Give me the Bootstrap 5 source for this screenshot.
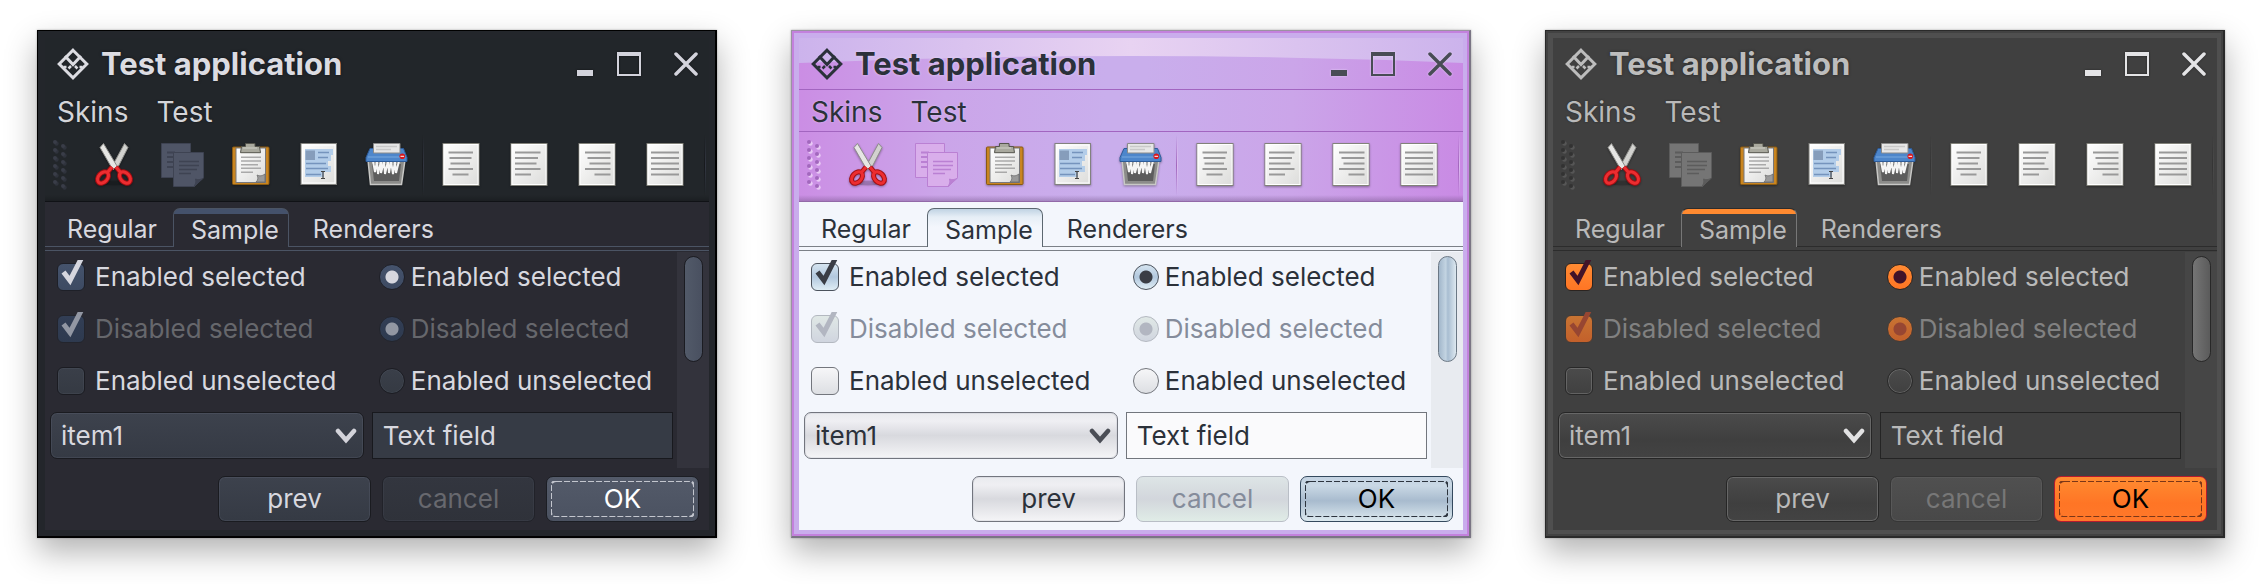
<!DOCTYPE html>
<html lang="en">
<head>
<meta charset="utf-8">
<meta name="viewport" content="width=device-width, initial-scale=1">
<title>Test application</title>
<link href="https://cdn.jsdelivr.net/npm/bootstrap@5.3.0/dist/css/bootstrap.min.css" rel="stylesheet">
<style>
body { background: #fff; font-family: Inter, "Liberation Sans", sans-serif; font-size: 25px; line-height: 30px; }
.skin-col { padding: 30px 37px 46px; }
svg { display: block; flex: none; }

/* window frame */
.skin-window {
  padding: 7px 6px 6px 7px; color: var(--fg); background: var(--frame);
  border-style: solid; border-color: var(--edge); border-width: 1px 2px 2px 1px;
  box-shadow: inset 0 0 0 2px var(--frame-line), 0 0 2px rgba(0,0,0,.3), 0 14px 30px rgba(0,0,0,.3);
}
.window-head { position: relative; background: var(--head); border-bottom: 1px solid var(--head-end); }
.window-head > * { position: relative; }
.window-head::after { content: ""; position: absolute; left: 0; right: 0; bottom: 0; height: 6px; background: linear-gradient(transparent, var(--head-fade)); }
.head-glow { position: absolute !important; top: 0; left: 0; width: 100%; height: 26px; display: none; }
.title-bar { height: 52px; padding: 0 3px 0 12px; border-bottom: 1px solid var(--head-line); }
.title-text { font-size: 31px; font-weight: 700; line-height: 34px; text-shadow: 0 0 3px var(--halo); margin: 0 auto 0 12px; color: var(--title); white-space: nowrap; }
.ctl { background: none; border: 0; padding: 0; color: var(--ctl); filter: drop-shadow(0 0 1px var(--halo)); }
.ctl + .ctl { margin-left: 24px; }
.ctl-close { width: 41px; }
.menu-bar { height: 42px; padding: 2px 0 0 12px; gap: 28px; font-size: 28px; border-bottom: 1px solid var(--head-line); }
.menu-bar a { color: var(--menu); text-decoration: none; text-shadow: 0 0 2px var(--halo); }
.tool-bar { height: 69px; padding-bottom: 6px; }
.grip { width: 35px; padding-left: 7px; }
.tool { flex: 0 1 68px; min-width: 0; background: none; border: 0; padding: 0; }
.tool svg { margin: auto; filter: drop-shadow(0 1px 1px rgba(0,0,0,.35)); }
.tool:disabled svg { filter: none; }
.tool-sep { width: 7px; height: 64px; padding: 3px 0 0 2px; flex: none; }
.tool-sep i { display: block; width: 2px; height: 100%; background: linear-gradient(90deg, var(--sep-a) 50%, var(--sep-b) 50%); mask-image: linear-gradient(transparent, #000 50%, transparent); -webkit-mask-image: linear-gradient(transparent, #000 50%, transparent); }

/* body */
.window-body { background: var(--body); }
.tab-strip { height: 45px; padding: 6px 0 0 4px; gap: 6px; border-bottom: 1px solid var(--rule); }
.tab-strip .nav-link { height: 39px; margin-bottom: -1px; padding: 3px 9px 0 17px; color: var(--fg); border: 1px solid transparent; border-radius: 7px 7px 0 0; line-height: 30px; }
.tab-strip .nav-link:hover { border-color: transparent; color: var(--fg); }
.tab-strip .nav-link.active, .tab-strip .nav-link.active:hover { color: var(--fg); background: var(--tab); border-color: var(--tab-line); border-bottom: 0; }
.pane { margin-top: 3px; border-top: 1px solid var(--rule); }
.field-grid { display: grid; grid-template-columns: 51fr 49fr; grid-auto-rows: 52px; padding: 0 0 9px 1px; }
.pick { padding-left: 11px; gap: 10px; white-space: nowrap; font-size: 26px; }
.pick-round { gap: 6px; }
.pick.pick-off { color: var(--off); }
.pick .form-check-input { float: none; margin: 0; width: 28px; height: 28px; background: var(--box); border: 1px solid var(--box-edge); border-radius: 6px; opacity: 1; box-shadow: inset 0 0 0 1px var(--box-in); }
.pick .form-check-input[type=radio] { width: 26px; height: 26px; border-radius: 50%; }
.pick .form-check-input:checked { background: var(--box-on); border-color: var(--box-on-edge); box-shadow: none; }
.pick .form-check-input:disabled { background: var(--box-off); border-color: var(--box-off-edge); box-shadow: none; }
.pick .form-check-input[type=radio]:checked { background: radial-gradient(circle, var(--mark) 6px, transparent 7px), var(--box-on); }
.pick .form-check-input[type=radio]:disabled { background: radial-gradient(circle, var(--mark-off) 6px, transparent 7px), var(--box-off); }
.pick-mark { position: absolute; left: 0; top: -3px; pointer-events: none; color: var(--mark); }
.pick-off .pick-mark { color: var(--mark-off); }
.field-cell { padding: 5px 4px; }
.skin-window .form-select, .skin-window .form-control { height: 47px; font-size: 26px; line-height: 30px; padding: 0 10px; color: var(--fg); }
.skin-window .form-select { background: var(--btn); border: 1px solid var(--btn-edge); border-radius: 7px; box-shadow: inset 0 0 0 1px var(--btn-in); }
.skin-window .form-control { background: var(--input); border: 1px solid var(--input-edge); border-radius: 0; }
.chevron { position: absolute; right: 7px; top: 15px; pointer-events: none; color: var(--arrow); }
.scroll-track { width: 32px; margin-top: 1px; padding: 4px 6px 0 7px; background: var(--track); flex: none; }
.scroll-thumb { height: 106px; border-radius: 10px; border: 1px solid var(--thumb-edge); background: var(--thumb); }
.button-row { height: 62px; padding: 8px 10px 0 0; gap: 11px; }
.button-row .btn { width: 153px; height: 46px; padding: 0; font-size: 26px; line-height: 30px; border-radius: 7px; color: var(--fg); background: var(--btn); border: 1px solid var(--btn-edge); box-shadow: inset 0 0 0 1px var(--btn-in); }
.button-row .btn:disabled { opacity: 1; color: var(--off-btn); background: var(--btn-off); border-color: var(--btn-off-edge); box-shadow: inset 0 0 0 1px var(--btn-off-in); }
.button-row .btn-ok { color: var(--ok-fg); background: var(--ok); border-color: var(--ok-edge); box-shadow: none; }
.focus-dash { position: absolute; inset: 4px; width: calc(100% - 8px); height: calc(100% - 8px); color: var(--dash); }

/* skins */
.skin-dusk {
  --edge:#000; --frame-line:#23262b; --frame:#23262b; --fg:#d8d8df; --title:#dcdce2; --menu:#d4d5d9; --halo:rgba(0,0,0,.5); --ctl:#d3d3dc;
  --head:#22262a; --head-line:transparent; --head-end:#101216; --head-fade:rgba(0,0,0,.2);
  --dot-a:#393d48; --dot-b:#2f333c; --sep-a:#17191d; --sep-b:#323641;
  --body:#2a2a32; --rule:#4b5464; --tab:linear-gradient(#44516b 5px, #2a2a32 5px); --tab-line:#4b5464;
  --off:#66676c; --off-btn:#67686e;
  --box:linear-gradient(#3a3f49,#353a43); --box-edge:#1b1c22; --box-in:rgba(120,130,150,.12);
  --box-on:linear-gradient(#45536c,#3d4a62); --box-on-edge:#1e2028; --box-off:linear-gradient(#323e55,#2e3a4f); --box-off-edge:#23252d;
  --mark:#d6d7df; --mark-off:#9297a3;
  --btn:linear-gradient(#3d424d,#353a44); --btn-edge:#1a1b20; --btn-in:rgba(120,130,150,.18); --arrow:#d3d3da;
  --btn-off:linear-gradient(#33363f,#2f323a); --btn-off-edge:#212229; --btn-off-in:rgba(120,130,150,.1);
  --ok:linear-gradient(#535a69,#4b5261); --ok-edge:#1c1e24; --ok-fg:#fff; --dash:#c3c6ce;
  --input:#363b45; --input-edge:#18191e; --track:#33333c; --thumb:linear-gradient(90deg,#525a69,#495060); --thumb-edge:#1b1c22;
  --page-a:#4f5566; --page-b:#3e4352;
}
.skin-orchid {
  --edge:#9b92a2 #7a7584 #7a7584 #9b92a2; --frame-line:#c381dd; --frame:#c9adec; --fg:#2b313a; --title:#2b313a; --menu:#2b313a; --halo:rgba(235,220,250,.8); --ctl:#484c55;
  --head:linear-gradient(92deg,#cb8de4,#cba5e9 22%,#c9aeec 46%,#c9aeec 52%,#cba5e9 74%,#c98ae4); --head-line:#a265c0; --head-end:#9269a8; --head-fade:rgba(110,80,130,.4);
  --dot-a:#a267bd; --dot-b:#e8c9f5; --sep-a:#a267bd; --sep-b:#dcbcef;
  --body:#f3f6fc; --rule:#7b8087; --tab:linear-gradient(#c0d3e3,#e6eef6 8px,#f3f6fc 18px); --tab-line:#5c6770;
  --off:#858c9b; --off-btn:#858c9b;
  --box:linear-gradient(#f6f6f8,#dddfe3); --box-edge:#73767d; --box-in:transparent;
  --box-on:linear-gradient(#d5e4f0,#b2c8de 50%,#dfedf5); --box-on-edge:#4b525c; --box-off:linear-gradient(#e0e8e6,#d0d5df); --box-off-edge:#b3b8c0;
  --mark:#3a3d45; --mark-off:#b2b6c1;
  --btn:linear-gradient(#e9eaee,#efeff3 18%,#d8d9de 50%,#f5f5f7); --btn-edge:#72757e; --btn-in:rgba(180,184,194,.25); --arrow:#4a4d55;
  --btn-off:linear-gradient(#dde5e6,#d2d6dc 50%,#e0ece7); --btn-off-edge:#b9bec6; --btn-off-in:transparent;
  --ok:linear-gradient(#c4d3e2,#c9d8e5 20%,#a8bbce 54%,#dce9ef); --ok-edge:#34495e; --ok-fg:#000; --dash:#2c343e;
  --input:#fafafc; --input-edge:#72767d; --track:#e8ebf0; --thumb:linear-gradient(90deg,#a2b7cb,#c3d4e2 40%,#a8bdd1 52%,#dde8f0); --thumb-edge:#6b7885;
  --page-a:#d9aeeb; --page-b:#ba80d3;
}
.skin-orchid .head-glow { display: block; }
.skin-ember {
  --edge:#2a2a2a; --frame-line:#424242; --frame:#4f4f4f; --fg:#b9b9b9; --title:#bdbdbd; --menu:#b9b9b9; --halo:rgba(30,30,30,.8); --ctl:#e4e4e6;
  --head:#404040; --head-line:transparent; --head-end:transparent; --head-fade:transparent;
  --dot-a:#323232; --dot-b:#565656; --sep-a:#353535; --sep-b:#4a4a4a;
  --body:#404040; --rule:#2c2c2c; --tab:linear-gradient(#ff8a30 5px, #404040 5px); --tab-line:#2c2c2c #777 #777 #777;
  --off:#818181; --off-btn:#777;
  --box:linear-gradient(#4b4b4b,#404040); --box-edge:#282828; --box-in:rgba(150,150,150,.4);
  --box-on:linear-gradient(#ff8b33,#ff7524); --box-on-edge:#2c2420; --box-off:linear-gradient(#c87433,#c3602b); --box-off-edge:#453a34;
  --mark:#421329; --mark-off:#974632;
  --btn:linear-gradient(#4b4b4b,#3f3f3f 60%,#434343); --btn-edge:#262626; --btn-in:#676767; --arrow:#e2e2e3;
  --btn-off:linear-gradient(#505050,#484848); --btn-off-edge:#363636; --btn-off-in:#585858;
  --ok:linear-gradient(#ff8c31,#ff7525 60%,#ff782a); --ok-edge:#b51b2e; --ok-fg:#000; --dash:#7b3617;
  --input:#404040; --input-edge:#242424; --track:#464646; --thumb:linear-gradient(90deg,#757575,#5b5b5b); --thumb-edge:#282828;
  --page-a:#757575; --page-b:#5c5c5c;
}
</style>
</head>
<body>
<svg width="0" height="0" class="position-absolute" aria-hidden="true">
  <defs>
    <linearGradient id="paper" x1="0" y1="0" x2="1" y2="1"><stop offset="0" stop-color="#fff"/><stop offset="1" stop-color="#dcdcda"/></linearGradient>
    <linearGradient id="glow"><stop offset="0" stop-color="#ccb3ec"/><stop offset=".5" stop-color="#e8d3f2"/><stop offset="1" stop-color="#ccb3ec"/></linearGradient>
    <symbol id="i-logo" viewBox="0 0 32 32"><g fill="none" stroke="currentColor" stroke-width="3"><path d="M16 2.200 29.800 16 16 29.800 2.200 16Z"/><path d="m8 8 8 8.500L24 8"/><path d="m14 18-2.500 2.500M18 18l2.500 2.500M6.500 19h3M25.500 19h-3" stroke-width="2.500"/></g></symbol>
    <symbol id="i-cut" viewBox="0 0 48 48">
      <ellipse cx="24" cy="43" rx="15" ry="2.500" fill="#000" opacity=".2"/>
      <path d="M34.500 3.500 38 7.500 27 29l-5-2.500Z" fill="#d2d2cf" stroke="#8d8d8a"/><path d="M13.500 3.500 10 7.500 23 30l4-4Z" fill="#e6e6e4" stroke="#8d8d8a"/>
      <g fill="none" stroke="#a30d12" stroke-width="5"><ellipse cx="13" cy="37.500" rx="6.500" ry="4.500" transform="rotate(-48 13 37.500)"/><ellipse cx="35" cy="37.500" rx="6.500" ry="4.500" transform="rotate(48 35 37.500)"/><path d="m17 33 5-6M31 33l-5-6"/></g>
      <g fill="none" stroke="#ec2d30" stroke-width="3"><ellipse cx="13" cy="37.500" rx="6.500" ry="4.500" transform="rotate(-48 13 37.500)"/><ellipse cx="35" cy="37.500" rx="6.500" ry="4.500" transform="rotate(48 35 37.500)"/><path d="m17 33 5-6M31 33l-5-6"/></g>
    </symbol>
    <symbol id="i-copy" viewBox="0 0 48 48"><g style="fill:var(--page-a);stroke:var(--page-b)"><path d="M3.500 3.500h29v34h-29Z"/><path d="M9 12.500h8M9 17h8M9 22h8M9 27h8" stroke-width="2"/><path d="M15.500 12.500h30v25l-9 9h-21Z"/><path d="M21 21.500h20M21 25.500h20M21 29.500h18M21 33.500h12" stroke-width="1.500"/><path d="M45.500 38c-3 2-6 2-8 1 1 3 0 5-1.500 7.500Z" style="fill:var(--page-b)"/></g></symbol>
    <symbol id="i-paste" viewBox="0 0 48 48"><rect x="6.500" y="7" width="36.500" height="37.500" rx="1" fill="#c98520" stroke="#8a5a12"/><rect x="10" y="8" width="29.500" height="34.500" fill="url(#paper)" stroke="#77777a"/><path d="M30 42c2-2 2.500-4 1-7 3 1.500 5 1 8-1v8Z" fill="#9a9a9a" stroke="#666" stroke-width=".7"/><path d="M15 17.300h20M15 21h20M15 24.700h17M15 28.300h20M15 32.300h12" stroke="#a9a9a9" stroke-width="1.500"/><path d="M19.500 3.500h9.500v3h4.500l1 6.200h-20l1-6.200h4Z" fill="#a9a99e" stroke="#55554d"/><path d="M17 8h14" stroke="#d0d0c8"/></symbol>
    <symbol id="i-select" viewBox="0 0 48 48"><rect x="7" y="3.500" width="35.500" height="41" fill="url(#paper)" stroke="#82827f"/><rect x="8.500" y="5" width="32.500" height="38" fill="none" stroke="#fff"/><path d="M11 9h28v6h-2v6h-3v5h3v6h-7v5H11Z" fill="#b3cde9"/><path d="M11.500 10.500H21V20h-9.500Z" fill="#869dbb"/><path d="M24 12.500h11M24 17.500h10M12 23.500h20M12 28.500h22M12 34.500h15" stroke="#7594bd" stroke-width="1.700"/><path d="M27 31.500h4M27 38.500h4M29 31.500v7" stroke="#444" stroke-width="1.200"/></symbol>
    <symbol id="i-shred" viewBox="0 0 48 48"><path d="M6 20h37l-3.500 24.500h-31Z" fill="#8c8c8a" stroke="#c8c8c6" stroke-width="1.500"/><path d="M10 24h29l-2 17H12Z" fill="#5d5d5d"/><path d="m11 21 2 11 2-11 1 13 3-13 0 12 3-12 1 13 3-13 1 12 2-12 2 13 2-13 1 12 3-12" fill="none" stroke="#f5f5f5" stroke-width="2"/><path d="M8 8.500h33.500l3.500 9v4H4v-4Z" fill="#4d86cb" stroke="#2d5b99"/><path d="M6 17h37" stroke="#79a9df"/><path d="M11.500 3.500H38v9.500H11.500Z" fill="#e7e7e7" stroke="#8b8b8b"/><path d="M14 6.500h21M14 9.500h15" stroke="#c8c8c8" stroke-width="1.500"/><circle cx="40.300" cy="16.300" r="2.800" fill="#d8171c"/><path d="M38.500 16.300h3.600" stroke="#fff"/></symbol>
    <symbol id="i-page" viewBox="0 0 48 48"><rect x="6" y="3.500" width="36" height="42" fill="url(#paper)" stroke="#82827a"/><rect x="7" y="4.500" width="34" height="40" fill="none" stroke="#fff"/></symbol>
  </defs>
</svg>

<main class="container-fluid p-0">
  <div class="row g-0 row-cols-1 row-cols-xxl-3" id="gallery"></div>
</main>

<template id="window-template">
  <div class="col skin-col">
    <section class="skin-window">
      <header class="window-head">
        <svg class="head-glow" viewBox="0 0 664 26" preserveAspectRatio="none" aria-hidden="true"><path d="M0 0h664v25Q332 11 0 25Z" fill="url(#glow)"/></svg>
        <div class="title-bar d-flex align-items-center">
          <svg width="32" height="32" style="color:var(--title)" aria-hidden="true"><use href="#i-logo"/></svg>
          <h1 class="title-text">Test application</h1>
          <button class="ctl" type="button" aria-label="Minimize"><svg width="16" height="24"><path d="M0 18h16v6H0Z" fill="currentColor"/></svg></button>
          <button class="ctl" type="button" aria-label="Maximize"><svg width="24" height="24"><path d="M0 0h24v24H0ZM2 4v18h20V4Z" fill="currentColor" fill-rule="evenodd"/></svg></button>
          <button class="ctl ctl-close" type="button" aria-label="Close"><svg class="mx-auto" width="24" height="24"><path d="m2 2 20 20M22 2 2 22" stroke="currentColor" stroke-width="3.500" stroke-linecap="round"/></svg></button>
        </div>
        <nav class="menu-bar d-flex align-items-center"><a href="#">Skins</a><a href="#">Test</a></nav>
        <div class="tool-bar d-flex align-items-center" role="toolbar">
          <div class="grip"><svg class="grip-dots" width="18" height="52" aria-hidden="true"></svg></div>
          <button class="tool" type="button" aria-label="Cut"><svg width="48" height="48"><use href="#i-cut"/></svg></button>
          <button class="tool" type="button" aria-label="Copy" disabled><svg width="48" height="48"><use href="#i-copy"/></svg></button>
          <button class="tool" type="button" aria-label="Paste"><svg width="48" height="48"><use href="#i-paste"/></svg></button>
          <button class="tool" type="button" aria-label="Select all"><svg width="48" height="48"><use href="#i-select"/></svg></button>
          <button class="tool" type="button" aria-label="Delete"><svg width="48" height="48"><use href="#i-shred"/></svg></button>
          <div class="tool-sep"><i></i></div>
          <button class="tool" type="button" aria-label="Center"><svg width="48" height="48"><use href="#i-page"/><path d="M11.500 12.500H36M12.500 18h22M13.500 23.500H33M11.500 29H36M15.500 34.500h16" stroke="#999" stroke-width="2"/></svg></button>
          <button class="tool" type="button" aria-label="Align left"><svg width="48" height="48"><use href="#i-page"/><path d="M10 12.500h25.500M10 18h23M10 23.500h21.500M10 29h25.500M10 34.500h16" stroke="#999" stroke-width="2"/></svg></button>
          <button class="tool" type="button" aria-label="Align right"><svg width="48" height="48"><use href="#i-page"/><path d="M12 12.500h25.500M14.500 18h23M16.500 23.500h21M12 29h25.500M21.500 34.500h16" stroke="#999" stroke-width="2"/></svg></button>
          <button class="tool" type="button" aria-label="Justify"><svg width="48" height="48"><use href="#i-page"/><path d="M10 12.500h28M10 18h28M10 23.500h28M10 29h28M10 34.500h28" stroke="#999" stroke-width="2"/></svg></button>
          <div class="tool-sep ms-auto"><i></i></div>
        </div>
      </header>
      <div class="window-body">
        <div class="nav nav-tabs tab-strip flex-nowrap" role="tablist">
          <button class="nav-link" type="button" role="tab">Regular</button>
          <button class="nav-link active" type="button" role="tab" aria-selected="true">Sample</button>
          <button class="nav-link" type="button" role="tab">Renderers</button>
        </div>
        <div class="pane d-flex">
          <div class="field-grid flex-grow-1">
            <div class="pick d-flex align-items-center"><span class="position-relative"><input class="form-check-input d-block" type="checkbox" data-id="c1" checked><svg class="pick-mark" width="30" height="26"><path d="m6.500 12 6.500 8.500L25-3" fill="none" stroke="currentColor" stroke-width="5"/></svg></span><label data-for="c1">Enabled selected</label></div>
            <div class="pick pick-round d-flex align-items-center"><input class="form-check-input" type="radio" data-id="r1" data-name="on" checked><label data-for="r1">Enabled selected</label></div>
            <div class="pick pick-off d-flex align-items-center"><span class="position-relative"><input class="form-check-input d-block" type="checkbox" data-id="c2" checked disabled><svg class="pick-mark" width="30" height="26"><path d="m6.500 12 6.500 8.500L25-3" fill="none" stroke="currentColor" stroke-width="5"/></svg></span><label data-for="c2">Disabled selected</label></div>
            <div class="pick pick-round pick-off d-flex align-items-center"><input class="form-check-input" type="radio" data-id="r2" data-name="off" checked disabled><label data-for="r2">Disabled selected</label></div>
            <div class="pick d-flex align-items-center"><input class="form-check-input" type="checkbox" data-id="c3"><label data-for="c3">Enabled unselected</label></div>
            <div class="pick pick-round d-flex align-items-center"><input class="form-check-input" type="radio" data-id="r3" data-name="on"><label data-for="r3">Enabled unselected</label></div>
            <div class="field-cell"><div class="position-relative"><select class="form-select" aria-label="Item"><option>item1</option><option>item2</option></select><svg class="chevron" width="22" height="18"><path d="m3 4 8 9 8-9" fill="none" stroke="currentColor" stroke-width="4.500" stroke-linecap="round"/></svg></div></div>
            <div class="field-cell"><input class="form-control" type="text" value="Text field" aria-label="Text"></div>
          </div>
          <div class="scroll-track"><div class="scroll-thumb"></div></div>
        </div>
        <footer class="button-row d-flex justify-content-end">
          <button class="btn" type="button">prev</button>
          <button class="btn" type="button" disabled>cancel</button>
          <button class="btn btn-ok position-relative" type="button">OK<svg class="focus-dash" aria-hidden="true"><rect width="100%" height="100%" rx="5" fill="none" stroke="currentColor" stroke-width="2" stroke-dasharray="6 2"/></svg></button>
        </footer>
      </div>
    </section>
  </div>
</template>

<script>
const gallery = document.getElementById('gallery');
const template = document.getElementById('window-template');
let dots = '';
for (let i = 0; i < 6; i++) {
  for (const [x, y] of [[3, 4], [11, 8]]) {
    dots += `<circle cx="${x + 1.5}" cy="${y + i * 8 + 1.5}" r="2.2" style="fill:var(--dot-b)"/><circle cx="${x}" cy="${y + i * 8}" r="2" style="fill:var(--dot-a)"/>`;
  }
}
for (const skin of ['dusk', 'orchid', 'ember']) {
  const node = template.content.cloneNode(true);
  node.querySelector('.skin-window').classList.add('skin-' + skin);
  node.querySelector('.grip-dots').innerHTML = dots;
  node.querySelectorAll('[data-id]').forEach(el => { el.id = skin + '-' + el.dataset.id; if (el.dataset.name) el.name = skin + '-' + el.dataset.name; });
  node.querySelectorAll('[data-for]').forEach(el => { el.htmlFor = skin + '-' + el.dataset.for; });
  gallery.append(node);
}
</script>
<script src="https://cdn.jsdelivr.net/npm/bootstrap@5.3.0/dist/js/bootstrap.bundle.min.js"></script>
</body>
</html>
